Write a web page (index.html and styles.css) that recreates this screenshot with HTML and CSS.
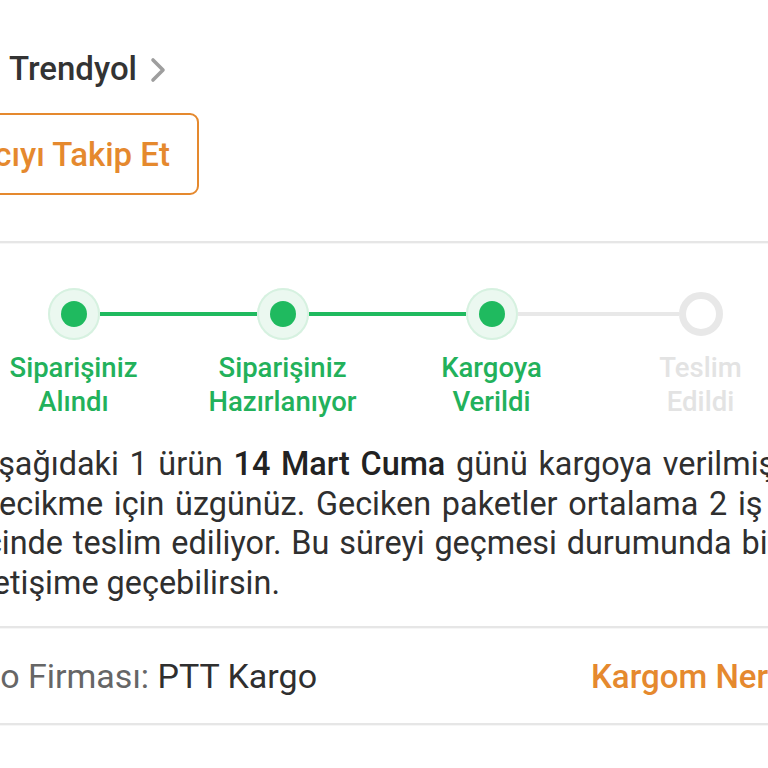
FILE: index.html
```html
<!DOCTYPE html>
<html lang="tr">
<head>
<meta charset="utf-8">
<title>Sipariş Detayı</title>
<link rel="stylesheet" href="styles.css">
</head>
<body>
<div class="page">
  <section class="seller">
    <div class="seller-name">
      <span>Trendyol</span>
      <svg class="chev" width="18" height="26" viewBox="0 0 18 26"><polyline points="4,3 14,13 4,23" fill="none" stroke="#9e9e9e" stroke-width="3.6" stroke-linecap="round" stroke-linejoin="round"/></svg>
    </div>
    <div class="follow-row">
      <button class="follow-btn">Satıcıyı Takip Et</button>
    </div>
  </section>

  <hr class="divider">

  <section class="status">
    <div class="stepper">
      <div class="step done first">
        <div class="track"><span class="seg"></span><span class="dot"></span><span class="seg green"></span></div>
        <div class="label">Siparişiniz<br>Alındı</div>
      </div>
      <div class="step done">
        <div class="track"><span class="seg green"></span><span class="dot"></span><span class="seg green"></span></div>
        <div class="label">Siparişiniz<br>Hazırlanıyor</div>
      </div>
      <div class="step done">
        <div class="track"><span class="seg green"></span><span class="dot"></span><span class="seg gray"></span></div>
        <div class="label">Kargoya<br>Verildi</div>
      </div>
      <div class="step pending">
        <div class="track"><span class="seg gray"></span><span class="dot"></span><span class="seg"></span></div>
        <div class="label">Teslim<br>Edildi</div>
      </div>
    </div>

    <p class="note">
      <span class="line first">Aşağıdaki 1 ürün <b>14 Mart Cuma</b> günü kargoya verilmiş.</span>
      <span class="line">Gecikme için üzgünüz. Geciken paketler ortalama 2 iş günü</span>
      <span class="line">içinde teslim ediliyor. Bu süreyi geçmesi durumunda bizimle</span>
      <span class="line last">iletişime geçebilirsin.</span>
    </p>
  </section>

  <hr class="divider">

  <section class="cargo-row">
    <div class="cargo-info"><span class="muted">Kargo Firması:</span> PTT Kargo</div>
    <a class="cargo-link">Kargom Nerede?</a>
  </section>

  <hr class="divider">
</div>
</body>
</html>
```

FILE: styles.css
```css
* { box-sizing: border-box; }
html, body { margin: 0; padding: 0; background: #fff; }
body {
  font-family: Roboto, "Noto Sans", "Liberation Sans", sans-serif;
  color: #333;
  width: 768px;
  height: 768px;
  overflow: hidden;
}
.page { width: 768px; overflow: hidden; }

.seller { padding-top: 47px; padding-bottom: 46px; }
.seller-name {
  display: flex;
  align-items: center;
  gap: 12px;
  margin-left: 9px;
  font-size: 33px;
  font-weight: 500;
  line-height: 44px;
  color: #333;
}
.chev { display: block; margin-top: 2px; }

.follow-row {
  width: 199px;
  display: flex;
  justify-content: flex-end;
  margin-top: 22px;
}
.follow-btn {
  flex: 0 0 auto;
  height: 82px;
  padding: 0 27px;
  border: 2px solid #e5892e;
  border-radius: 9px;
  background: #fff;
  color: #e5892e;
  font-family: inherit;
  font-size: 33px;
  font-weight: 500;
  white-space: nowrap;
}

.divider {
  margin: 0;
  border: 0;
  height: 3px;
  background: linear-gradient(#e6e6e6 0 2px, #f6f6f6 2px);
}

.status { padding-top: 44px; padding-bottom: 23px; }
.stepper {
  display: grid;
  grid-template-columns: repeat(4, 209px);
  margin-left: -31px;
}
.step { display: flex; flex-direction: column; align-items: center; }
.track { display: flex; align-items: center; width: 100%; height: 52px; }
.seg { flex: 1; height: 4px; }
.seg.green { background: #1fba5f; }
.seg.gray { background: #e8e8e8; }
.dot { flex: 0 0 auto; border-radius: 50%; display: flex; align-items: center; justify-content: center; }
.done .dot {
  width: 52px; height: 52px;
  background: #ebf8f0;
  box-shadow: inset 0 0 0 2px #d6f1e0;
}
.done .dot::after {
  content: "";
  width: 26px; height: 26px;
  border-radius: 50%;
  background: #1fba5f;
}
.pending .dot {
  width: 44px; height: 44px;
  border: 7px solid #e8e8e8;
  background: #fff;
}
.label {
  margin-top: 11px;
  text-align: center;
  font-size: 27.5px;
  font-weight: 500;
  line-height: 34px;
  color: #22b15b;
  white-space: nowrap;
}
.pending .label { color: #e3e3e3; }

.note {
  width: 868px;
  margin: 26px 0 0 -23px;
  font-size: 32.4px;
  line-height: 39.5px;
  color: #2f2f2f;
}
.note .line {
  display: block;
  white-space: nowrap;
  text-align: justify;
  text-align-last: justify;
}
.note .line.first { text-align-last: left; word-spacing: 2.6px; }
.note .line.last { text-align-last: left; }
.note b { font-weight: 500; color: #222; }

.cargo-row {
  display: flex;
  align-items: center;
  height: 94px;
  font-size: 34px;
  white-space: nowrap;
}
.cargo-info { flex: 0 0 auto; width: 661px; margin-left: -70px; color: #2f2f2f; }
.muted { color: #666; }
.cargo-link { color: #e5892e; font-weight: 500; font-size: 33px; }
```
